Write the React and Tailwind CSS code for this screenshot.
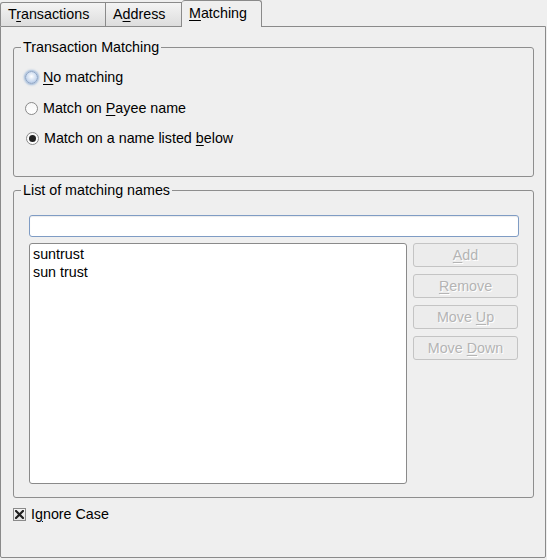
import React from "react";

const U = ({ children }) => <span className="underline underline-offset-2">{children}</span>;

function Radio({ state }) {
  if (state === "focus") {
    return (
      <span className="w-[13px] h-[13px] rounded-full border border-[#8da4c4] bg-[radial-gradient(circle_at_50%_40%,#ffffff_0%,#c8d8ee_60%,#9bb3d6_100%)] shadow-[0_0_2px_1px_rgba(120,160,210,0.7)] shrink-0" />
    );
  }
  return (
    <span className="w-[13px] h-[13px] rounded-full border border-[#8a8a8a] bg-[linear-gradient(#f6f6f6,#ffffff)] flex items-center justify-center shrink-0">
      {state === "checked" && <span className="w-[7px] h-[7px] rounded-full bg-[#202020]" />}
    </span>
  );
}

function Btn({ children }) {
  return (
    <div className="h-[24px] w-[105px] rounded-[3px] border border-[#c4c4c4] bg-[#ececec] flex items-center justify-center text-[#b4b4b4] [text-shadow:1px_1px_0_#ffffff]">
      <span>{children}</span>
    </div>
  );
}

export default function App() {
  return (
    <div className="w-[547px] h-[560px] bg-[#efefef] text-[14.3px] text-[#000] leading-none" style={{ fontFamily: '"Liberation Sans", Arial, sans-serif' }}>
      {/* tabs */}
      <div className="flex h-[26px] items-end relative z-10">
        <div className="h-[24px] w-[106px] border border-b-0 border-[#8a8a8a] rounded-tl-[3px] bg-[linear-gradient(#f4f4f4,#dddddd)] flex items-center pl-[7px]">
          <span>T<U>r</U>ansactions</span>
        </div>
        <div className="h-[24px] w-[76px] border border-b-0 border-l-0 border-[#8a8a8a] bg-[linear-gradient(#f4f4f4,#dddddd)] flex items-center pl-[7px]">
          <span>A<U>d</U>dress</span>
        </div>
        <div className="h-[27px] w-[80px] -mb-px border border-b-0 border-l-0 border-[#8a8a8a] rounded-t-[3px] bg-[#efefef] flex items-center pl-[7px] pb-[2px]">
          <span><U>M</U>atching</span>
        </div>
      </div>
      {/* pane */}
      <div className="w-[546px] h-[532px] border border-[#8a8a8a] rounded-b-[2px] px-[12px] pt-[14px]">
        {/* group 1 */}
        <div className="relative mt-[6px] h-[130px] w-[521px] border border-[#8e8e8e] rounded-[3px]">
          <div className="absolute -top-[8px] left-[7px] px-[2px] bg-[#efefef]">Transaction Matching</div>
          <div className="flex flex-col pl-[11px] pt-[23px] gap-[17.5px]">
            <div className="flex items-center gap-[5px] h-[13px]">
              <Radio state="focus" />
              <span><U>N</U>o matching</span>
            </div>
            <div className="flex items-center gap-[5px] h-[13px]">
              <Radio />
              <span>Match on <U>P</U>ayee name</span>
            </div>
            <div className="flex items-center gap-[5px] h-[13px] pl-px">
              <Radio state="checked" />
              <span>Match on a name listed <U>b</U>elow</span>
            </div>
          </div>
        </div>
        {/* group 2 */}
        <div className="relative mt-[13px] h-[308px] w-[521px] border border-[#8e8e8e] rounded-[3px] px-[15px] pt-[24px]">
          <div className="absolute -top-[8px] left-[7px] px-[2px] bg-[#efefef]">List of matching names</div>
          <div className="h-[22px] w-[490px] rounded-[3px] border border-[#7f9cc4] bg-white shadow-[inset_0_1px_1px_rgba(0,0,0,0.08)]" />
          <div className="flex gap-[6px] mt-[6px]">
            <div className="w-[380px] h-[241px] rounded-[3px] border border-[#8a8a8a] bg-white pl-[3px] pt-[1px] leading-[18px]">
              <div>suntrust</div>
              <div>sun trust</div>
            </div>
            <div className="flex flex-col gap-[7px]">
              <Btn><U>A</U>dd</Btn>
              <Btn><U>R</U>emove</Btn>
              <Btn>Move <U>U</U>p</Btn>
              <Btn>Move <U>D</U>own</Btn>
            </div>
          </div>
        </div>
        {/* checkbox */}
        <div className="flex items-center mt-[9px] gap-[5px] h-[14px]">
          <span className="w-[13px] h-[13px] border border-[#8a8a8a] bg-[linear-gradient(#f4f4f4,#e4e4e4)] flex items-center justify-center shrink-0">
            <svg width="9" height="9" viewBox="0 0 9 9">
              <path d="M1 1 L8 8 M8 1 L1 8" stroke="#202020" strokeWidth="2.2" strokeLinecap="square" />
            </svg>
          </span>
          <span>I<U>g</U>nore Case</span>
        </div>
      </div>
    </div>
  );
}
